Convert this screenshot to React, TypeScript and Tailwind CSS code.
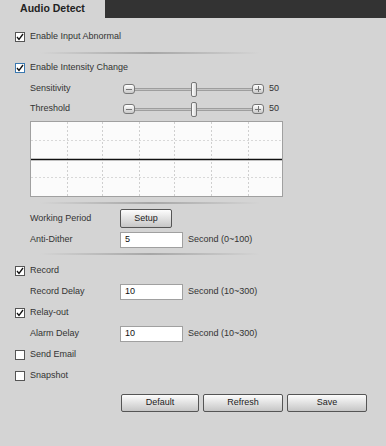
import React from "react";

const Check = ({ checked, focus }: { checked?: boolean; focus?: boolean }) => (
  <div
    className={
      "flex h-[10px] w-[10px] items-center justify-center border bg-white " +
      (focus ? "border-[#3a78b0]" : "border-[#555]")
    }
  >
    {checked && (
      <svg width="8" height="8" viewBox="0 0 8 8">
        <path d="M1 4 L3 6.5 L7 1" fill="none" stroke="#111" strokeWidth="1.3" />
      </svg>
    )}
  </div>
);

const CheckRow = ({ label, checked, focus }: { label: string; checked?: boolean; focus?: boolean }) => (
  <div className="flex h-[21px] items-center gap-[5px]">
    <Check checked={checked} focus={focus} />
    <span>{label}</span>
  </div>
);

const Sep = ({ className }: { className: string }) => (
  <div className={"ml-[25px] h-[2px] w-[220px] bg-linear-to-r from-transparent via-[#a6a6a6] to-transparent " + className} />
);

const SmallBtn = ({ plus }: { plus?: boolean }) => (
  <div className="relative h-[10px] w-[12px] rounded-[3px] border border-[#777] bg-linear-to-b from-white to-[#c9c9c9]">
    <div className="absolute left-[2px] top-[3.5px] h-px w-[6px] bg-[#777]" />
    {plus && <div className="absolute left-[4.5px] top-[1px] h-[6px] w-px bg-[#777]" />}
  </div>
);

const Slider = ({ value }: { value: number }) => (
  <div className="flex items-center">
    <div className="ml-[3px]">
      <SmallBtn />
    </div>
    <div className="relative h-[3px] w-[117px] border-y border-y-[#9e9e9e] bg-[#c4c4c4]">
      <div className="absolute left-[56px] top-[-7px] h-[15px] w-[6px] rounded-[2px] border border-[#777] bg-linear-to-r from-white to-[#d6d6d6]" />
    </div>
    <SmallBtn plus />
    <span className="ml-[5px]">{value}</span>
  </div>
);

const Input = ({ value }: { value: string }) => (
  <div className="flex h-[16px] w-[63px] items-center border border-[#a0a0a0] bg-white pl-[4px] text-[#111]">
    {value}
  </div>
);

const Btn = ({ label, w }: { label: string; w: string }) => (
  <div
    className={
      "flex h-[18px] items-center justify-center rounded-[2px] border border-[#555] bg-linear-to-b from-[#fdfdfd] to-[#c6c6c6] text-[#222] " +
      w
    }
  >
    {label}
  </div>
);

const Field = ({ label, children, h = "h-[21px]" }: { label: string; children: React.ReactNode; h?: string }) => (
  <div className={"flex items-center pl-[15px] " + h}>
    <span className="w-[90px]">{label}</span>
    {children}
  </div>
);

const Graph = () => (
  <div className="ml-[15px] mt-[2px] h-[76px] w-[253px] border border-[#a0a0a0] bg-[#fbfbfb]">
    <svg width="251" height="74" viewBox="0 0 251 74">
      {[36, 71, 108, 143, 180, 217].map((x) => (
        <line key={x} x1={x + 0.5} y1="0" x2={x + 0.5} y2="74" stroke="#cfcfcf" strokeDasharray="2 2" />
      ))}
      {[18, 55].map((y) => (
        <line key={y} x1="0" y1={y + 0.5} x2="251" y2={y + 0.5} stroke="#d8d8d8" strokeDasharray="2 2" />
      ))}
      <line x1="0" y1="37.5" x2="251" y2="37.5" stroke="#111" strokeWidth="1.5" />
    </svg>
  </div>
);

export default function App() {
  return (
    <div className="h-[446px] w-[386px] bg-[#d4d4d4] text-[9px] text-[#333]" style={{ fontFamily: '"Liberation Sans", Arial, sans-serif' }}>
      <div className="flex h-[18px]">
        <div className="flex w-[105px] items-center justify-center text-[10.5px] font-bold text-[#222]">Audio Detect</div>
        <div className="flex-1 bg-[#333]" />
      </div>

      <div className="pl-[15px]">
        <div className="mt-[8px]">
          <CheckRow label="Enable Input Abnormal" checked />
        </div>
        <Sep className="mt-[5px]" />
        <div className="mt-[3px]">
          <CheckRow label="Enable Intensity Change" checked focus />
        </div>
        <Field label="Sensitivity" h="mt-[1px] h-[20px]">
          <Slider value={50} />
        </Field>
        <Field label="Threshold" h="h-[20px]">
          <Slider value={50} />
        </Field>
        <Graph />
        <Sep className="mt-[5px]" />
        <Field label="Working Period" h="mt-[4px] h-[21px]">
          <Btn label="Setup" w="w-[52px] h-[19px]" />
        </Field>
        <Field label="Anti-Dither">
          <Input value="5" />
          <span className="ml-[5px]">Second (0~100)</span>
        </Field>
        <Sep className="mt-[3px]" />
        <div className="mt-[5px]">
          <CheckRow label="Record" checked />
        </div>
        <Field label="Record Delay">
          <Input value="10" />
          <span className="ml-[5px]">Second (10~300)</span>
        </Field>
        <CheckRow label="Relay-out" checked />
        <Field label="Alarm Delay">
          <Input value="10" />
          <span className="ml-[5px]">Second (10~300)</span>
        </Field>
        <CheckRow label="Send Email" />
        <CheckRow label="Snapshot" />
        <div className="mt-[8px] flex gap-[4px] pl-[106px]">
          <Btn label="Default" w="w-[78px]" />
          <Btn label="Refresh" w="w-[80px]" />
          <Btn label="Save" w="w-[80px]" />
        </div>
      </div>
    </div>
  );
}
